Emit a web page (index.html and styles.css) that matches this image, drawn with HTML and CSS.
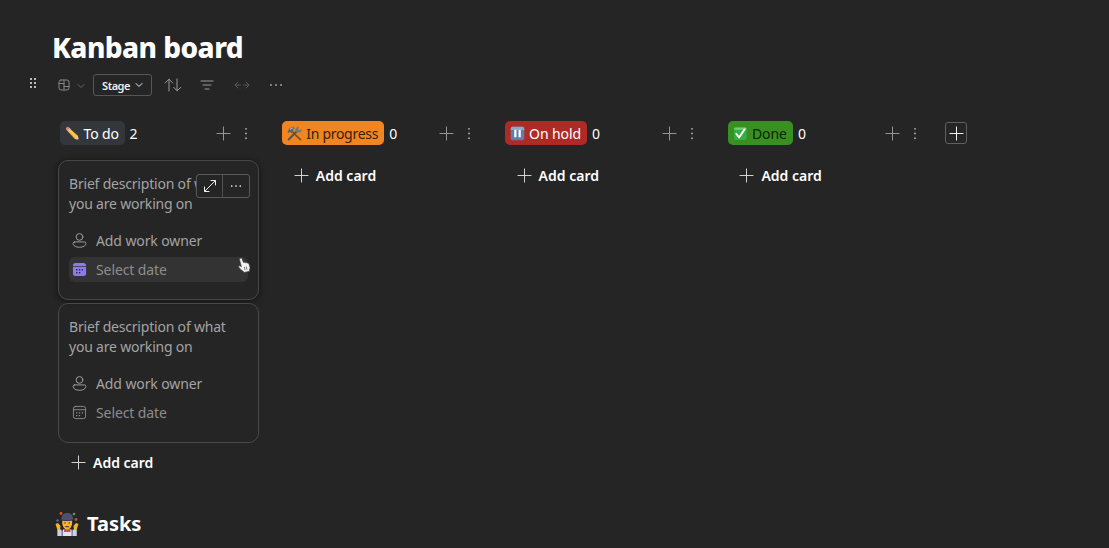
FILE: index.html
```html
<!DOCTYPE html>
<html lang="en">

<head>
    <meta charset="UTF-8">
    <meta name="viewport" content="width=device-width, initial-scale=1.0">
    <link rel="stylesheet" href="styles.css">
    <title>Kanban board</title>
</head>

<body>
    <!-- shared icons -->
    <svg class="sprite">
        <symbol id="plus" viewBox="0 0 16 16"><path d="M8 1v14M1 8h14" /></symbol>
        <symbol id="dots-v" viewBox="0 0 6 16"><path d="M3 3v.01M3 8v.01M3 13v.01" /></symbol>
        <symbol id="dots-h" viewBox="0 0 14 6"><path d="M2 3h.01M7 3h.01M12 3h.01" /></symbol>
        <symbol id="chevron" viewBox="0 0 8 6"><path d="M1 1.5l3 3 3-3" /></symbol>
        <symbol id="person" viewBox="0 0 16 16">
            <circle cx="8" cy="4.2" r="3.6" />
            <path d="M2.800 9.500h10.400a1.600 1.600 0 0 1 1.600 1.600c0 2.400-2.800 4.100-6.800 4.100s-6.800-1.700-6.800-4.100a1.600 1.600 0 0 1 1.600-1.600z" />
        </symbol>
        <symbol id="calendar" viewBox="0 0 16 16">
            <rect x="1.500" y="1.500" width="13" height="13" rx="2.400" />
            <path d="M1.500 5h13" />
            <path class="days" d="M7.300 8.300h1.400M10.400 8.300h1.400M4.300 11.300h1.400M7.300 11.300h1.400M4.300 8.300h1.400" />
        </symbol>
    </svg>

    <main class="page">
        <h1>Kanban board</h1>

        <div class="toolbar">
            <svg class="grip" viewBox="0 0 8 12"><path d="M2 2v.01M6 2v.01M2 6v.01M6 6v.01M2 10v.01M6 10v.01" /></svg>
            <svg class="view" viewBox="0 0 12 12"><rect x="1" y="1" width="10" height="10" rx="2" /><path d="M6 1v10M1 4.500h5M6 7.500h5" /></svg>
            <svg class="arrow"><use href="#chevron" /></svg>
            <button class="stage">Stage <svg><use href="#chevron" /></svg></button>
            <svg class="sort" viewBox="0 0 18 14"><path d="M5 13V1.200M1.200 5L5 1.200 8.800 5M13 1v11.800M9.700 9.300l3.300 3.500 3.800-3.500" /></svg>
            <svg class="filter" viewBox="0 0 14 12"><path d="M1 2h12M3 6h8M5 10h4" /></svg>
            <svg class="width" viewBox="0 0 16 8"><path d="M4 1L1 4l3 3M1 4h5.500M12 1l3 3-3 3M15 4H9.500" /></svg>
            <svg class="more"><use href="#dots-h" /></svg>
        </div>

        <div class="board">
            <section class="column">
                <header>
                    <span class="tag todo">
                        <svg class="emoji" viewBox="0 0 16 16">
                            <path fill="#f5b52e" d="M2.600 5.200l2.600-2.600 8.600 7.900-3.300 3.300z" />
                            <path fill="#fbd364" d="M3.500 4.300l.9-.9 8.500 8-1 1z" />
                            <path fill="#e8837c" d="M1 3.600C.3 2.600 2.500.4 3.600 1l1 .9-2.700 2.700z" />
                            <path fill="#b9c4cc" d="M1.900 4.600l2.700-2.700 1.200 1.100-2.700 2.700z" />
                            <path fill="#e6c59a" d="M13.500 10.200l1.700 5-5-1.600z" />
                            <path fill="#333" d="M14.600 13.400l.6 1.800-1.800-.6z" />
                        </svg>
                        To do</span>
                    <span class="count">2</span>
                    <svg class="add"><use href="#plus" /></svg>
                    <svg class="menu"><use href="#dots-v" /></svg>
                </header>
                <article class="card active">
                    <p>Brief description of what<br>you are working on</p>
                    <div class="field"><svg><use href="#person" /></svg>Add work owner</div>
                    <div class="field date">
                        <svg class="filled" viewBox="0 0 16 16">
                            <path d="M1 4.400V3.700a2.700 2.700 0 0 1 2.700-2.700h8.600a2.700 2.700 0 0 1 2.700 2.700v.7zM1 5.300h14v7a2.700 2.700 0 0 1-2.700 2.700H3.700a2.700 2.700 0 0 1-2.700-2.700z" />
                            <path class="holes" d="M4.300 8.300h1.500M7.300 8.300h1.500M10.300 8.300h1.500M4.300 11.400h1.500M7.300 11.400h1.500" />
                        </svg>Select date</div>
                    <div class="actions">
                        <span><svg class="expand" viewBox="0 0 14 14"><path d="M8 1.500h4.500V6M6 12.500H1.500V8M12.300 1.700L1.700 12.300" /></svg></span>
                        <span><svg class="dots"><use href="#dots-h" /></svg></span>
                    </div>
                    <svg class="pointer" viewBox="0 0 13 16"><path d="M2.200 1.200c1-.5 1.700.1 2 1l1.300 3.400c.6-.4 1.300-.3 1.700.2.6-.4 1.400-.2 1.800.3.900-.3 1.700.2 2 1.100l.9 2.700c.3 1.300-.1 2-.4 3l.1 1.300-5.600 1.300-.7-1.100C3.700 13.600 2.300 12 .8 10.300c-.5-1 .4-1.800 1.400-1.300l1.200.7L1.600 3c-.3-.9 0-1.500.6-1.800z" /><path d="M6.400 10.300l.6 2.400M8.300 9.900l.6 2.400" /></svg>
                </article>
                <article class="card">
                    <p>Brief description of what<br>you are working on</p>
                    <div class="field"><svg><use href="#person" /></svg>Add work owner</div>
                    <div class="field date"><svg><use href="#calendar" /></svg>Select date</div>
                </article>
                <div class="add-card"><svg><use href="#plus" /></svg>Add card</div>
            </section>

            <section class="column">
                <header>
                    <span class="tag progress">
                        <svg class="emoji" viewBox="0 0 16 16">
                            <path stroke="#8a4c20" stroke-width="2" d="M5 5.500l9.300 9" />
                            <path stroke="#59544f" stroke-width="2.200" d="M1.800 14.300L11 5" />
                            <path fill="#5d6668" d="M.5 6.200L2.600 2.400 7 .6l1.300 1.800-2 1.200.8 1.900-2.200 2-1.800-1.500L1.700 7.400z" />
                            <path fill="#6f787a" d="M9.300 5.800c-.9-2.600.7-5.200 3.500-5.100l-1 2.500 1.500 1.300 2.300-1.400c.2 2.900-2 4.500-4.600 3.800z" />
                            <path fill="#b9bdba" d="M2.600 3.200L6.500 1.400l.4.600-3.500 2z" />
                        </svg>
                        In progress</span>
                    <span class="count">0</span>
                    <svg class="add"><use href="#plus" /></svg>
                    <svg class="menu"><use href="#dots-v" /></svg>
                </header>
                <div class="add-card"><svg><use href="#plus" /></svg>Add card</div>
            </section>

            <section class="column">
                <header>
                    <span class="tag hold">
                        <svg class="emoji" viewBox="0 0 16 16">
                            <rect x=".8" y=".8" width="14.400" height="14.400" rx="2" fill="#5f7fa6" />
                            <path fill="#8ca8c8" d="M2.800.8h10.400a2 2 0 0 1 2 2v1.500H.8V2.800a2 2 0 0 1 2-2z" />
                            <path fill="#fff" d="M4.500 4h2.400v8H4.500zM9.100 4h2.400v8H9.100z" />
                        </svg>
                        On hold</span>
                    <span class="count">0</span>
                    <svg class="add"><use href="#plus" /></svg>
                    <svg class="menu"><use href="#dots-v" /></svg>
                </header>
                <div class="add-card"><svg><use href="#plus" /></svg>Add card</div>
            </section>

            <section class="column">
                <header>
                    <span class="tag done">
                        <svg class="emoji" viewBox="0 0 16 16">
                            <rect x="1.200" y="1.600" width="13.200" height="13.200" rx="1.500" fill="#35b044" />
                            <path fill="#70cf70" d="M2.700 1.600h10.200a1.500 1.500 0 0 1 1.500 1.500v1H1.200v-1a1.500 1.500 0 0 1 1.500-1.500z" />
                            <path stroke="#fff" stroke-width="2" fill="none" d="M3.500 8.200l3 4L12.300 3.600" />
                        </svg>
                        Done</span>
                    <span class="count">0</span>
                    <svg class="add"><use href="#plus" /></svg>
                    <svg class="menu"><use href="#dots-v" /></svg>
                </header>
                <div class="add-card"><svg><use href="#plus" /></svg>Add card</div>
            </section>

            <button class="new-column"><svg><use href="#plus" /></svg></button>
        </div>

        <h2>
            <!-- juggler -->
            <svg viewBox="0 0 24 26">
                <circle cx="6" cy="2.500" r="1.400" fill="#e0532f" />
                <circle cx="19" cy="3" r="1.300" fill="#6c9460" />
                <circle cx="2.600" cy="9.500" r="1.300" fill="#5964ad" />
                <circle cx="21" cy="8.500" r="1.400" fill="#a35f3b" />
                <path fill="#7b759f" d="M2.500 25v-7l3.800 2 4-2.500h4l4 2.500 3.200-2V25z" />
                <path fill="#cfcfe2" d="M2.500 18.500h4V25h-4zM17.700 18.500h4V25h-4z" />
                <path fill="#e3e1ed" d="M8 18.500h8.500V25H8z" />
                <path fill="#c25564" d="M9 18h6.500v3H9z" />
                <path fill="#f1b62d" d="M.5 13l2.500-1 2.500 3-.5 4H2.500zM23.500 13L21 12l-2.500 3 .5 4h2.500z" />
                <ellipse cx="12.200" cy="12" rx="5" ry="6.500" fill="#f3b52c" />
                <path fill="#50516e" d="M6.300 9C6 4.500 8.500 2 12.200 2S18.500 4.500 18 9c-3 1.200-8.600 1.200-11.700 0z" />
                <path stroke="#373850" d="M6.300 8.700c3 1.200 8.700 1.200 11.700 0" fill="none" />
                <path fill="#6d4422" d="M9.300 11.300h1.400v1.300H9.300zM13.600 11.300H15v1.300h-1.400zM10.300 15h3.700v1.200h-3.700z" />
            </svg>
            <span>Tasks</span>
        </h2>
    </main>
</body>

</html>
```
FILE: styles.css
```css
* {
    box-sizing: border-box;
}

body {
    margin: 0;
    height: 548px;
    overflow: hidden;
    background-color: #252525;
    color: #fff;
    font-family: "Noto Sans", "Open Sans", sans-serif;
    font-size: 14px;
}

svg {
    display: block;
    flex: none;
    fill: none;
    stroke: currentColor;
    stroke-width: 1;
    stroke-linecap: round;
    stroke-linejoin: round;
}

.sprite {
    display: none;
}

button {
    padding: 0;
    background: none;
    color: inherit;
    font-family: inherit;
}

.page {
    padding: 27px 0 0 27px;
}

h1 {
    margin: 0 0 0 25px;
    font-size: 28px;
    font-weight: 800;
    line-height: 40px;
    letter-spacing: -0.550px;
}

/* toolbar */
.toolbar {
    display: flex;
    align-items: center;
    height: 22px;
    margin-top: 7px;
    color: #9a9a9a;
}

.grip {
    width: 8px;
    height: 12px;
    margin: -5px 0 0 2px;
    color: #eee;
    stroke-width: 2;
}

.view {
    width: 12px;
    height: 12px;
    margin-left: 21px;
    color: #858585;
}

.arrow {
    width: 8px;
    height: 6px;
    margin: 2px 0 0 7px;
    color: #666;
}

.stage {
    display: flex;
    align-items: center;
    justify-content: center;
    gap: 5px;
    width: 59px;
    height: 22px;
    margin-left: 8px;
    border: 1px solid #565656;
    border-radius: 3px;
    color: #eee;
    font-size: 11px;
    font-weight: 600;
    letter-spacing: -0.5px;
}

.stage svg {
    width: 8px;
    height: 6px;
}

.sort {
    width: 18px;
    height: 14px;
    margin-left: 12px;
}

.filter {
    width: 14px;
    height: 12px;
    margin-left: 18px;
}

.width {
    width: 16px;
    height: 8px;
    margin-left: 20px;
    color: #595959;
}

.more {
    width: 14px;
    height: 6px;
    margin-left: 19px;
    stroke-width: 2;
}

/* board */
.board {
    display: flex;
    gap: 22px;
    height: 387px;
    margin: 25px 0 0 31px;
}

.column {
    width: 200.800px;
}

.column header {
    display: flex;
    align-items: center;
    height: 24px;
    margin-bottom: 15px;
    padding-left: 1.500px;
}

.tag {
    display: flex;
    align-items: center;
    gap: 4px;
    height: 24px;
    padding-left: 5px;
    border-radius: 5px;
    letter-spacing: -0.1px;
}

.emoji {
    width: 15px;
    height: 15px;
    stroke: none;
}

.todo {
    width: 65px;
    background-color: #33373b;
}

.progress {
    width: 102px;
    background-color: #f08521;
    color: #3a1d04;
    letter-spacing: -0.3px;
}

.hold {
    width: 82px;
    background-color: #ad2a25;
}

.done {
    width: 65px;
    background-color: #3a8f22;
    color: #0b2405;
}

.count {
    margin-left: 5px;
}

.add {
    width: 15px;
    height: 15px;
    margin-left: auto;
    color: #9c9c9c;
}

.menu {
    width: 6px;
    height: 15px;
    margin: 0 9.500px 0 12px;
    color: #aaa;
    stroke-width: 2;
}

.card {
    position: relative;
    height: 140px;
    margin-bottom: 3px;
    padding: 13px 10px;
    border: 1px solid #484848;
    border-radius: 10px;
    color: #a3a3a3;
}

.active {
    box-shadow: 0 1px 5px 1px #171717;
}

.card p {
    margin: 0 0 14px;
    line-height: 20px;
    letter-spacing: -0.200px;
    white-space: nowrap;
}

.field {
    display: flex;
    align-items: center;
    gap: 9px;
    height: 25px;
    margin-bottom: 4px;
    padding-left: 3px;
    border-radius: 6px;
    letter-spacing: -0.100px;
}

.field svg {
    width: 15px;
    height: 15px;
}

.date {
    color: #8d8d8d;
}

.active .date {
    background-color: #333;
}

.field .filled {
    fill: #9079e8;
    stroke: none;
}

.filled .holes {
    stroke: #333;
    stroke-width: 1.500;
    stroke-linecap: butt;
}

.days {
    stroke-width: 1.400;
    stroke-linecap: butt;
}

/* floating buttons over the card text */
.actions {
    position: absolute;
    top: 13px;
    right: 8px;
    display: flex;
    width: 54px;
    height: 24px;
    border: 1px solid #595959;
    border-radius: 3px;
    background-color: #252525;
    color: #eee;
}

.actions span {
    display: flex;
    align-items: center;
    justify-content: center;
    flex: 1;
}

.actions span + span {
    border-left: 1px solid #505050;
}

.expand {
    width: 14px;
    height: 14px;
}

.dots {
    width: 12px;
    height: 6px;
    stroke-width: 2;
}

.pointer {
    position: absolute;
    top: 96px;
    right: 7px;
    width: 13px;
    height: 16px;
    fill: #f2f2f2;
    stroke: #444;
    stroke-width: 0.700;
}

.add-card {
    display: flex;
    align-items: center;
    gap: 7px;
    height: 32px;
    margin-top: -1px;
    padding-left: 13px;
    font-weight: 600;
}

.card + .add-card {
    margin-top: 0;
}

.add-card svg {
    width: 15px;
    height: 15px;
    color: #ddd;
}

.new-column {
    width: 22px;
    height: 22px;
    margin: 1px 0 0 -4px;
    border: 1px solid #606060;
    border-radius: 3px;
}

.new-column svg {
    width: 15px;
    height: 15px;
    margin: auto;
}

h2 {
    display: flex;
    align-items: center;
    gap: 8px;
    margin: 0 0 0 28px;
    font-size: 20px;
    line-height: 32px;
}

h2 svg {
    width: 24px;
    height: 26px;
    stroke: none;
}
```
